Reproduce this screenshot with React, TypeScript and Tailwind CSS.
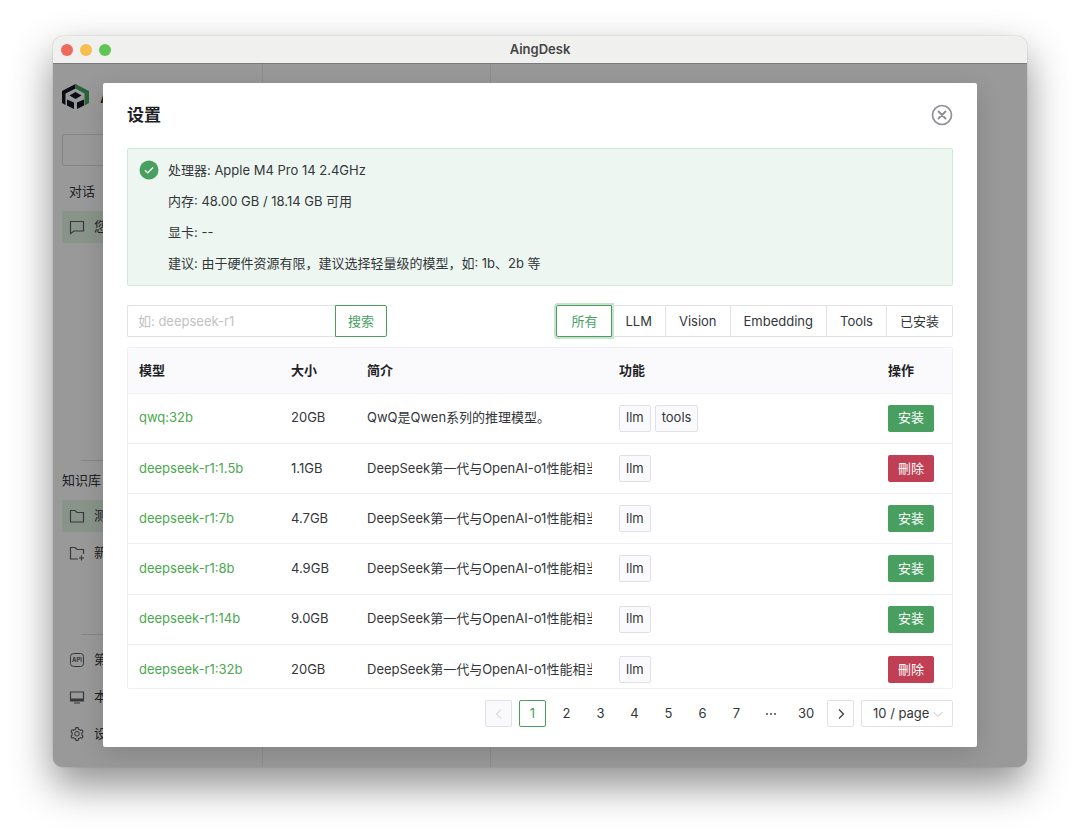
import { useState, type ReactNode } from "react"
import { AiOutlineSetting } from "react-icons/ai"

interface Model {
  name: string
  size: string
  description: string
  tags: string[]
  installed: boolean
}

const deepseekIntro = "DeepSeek第一代与OpenAI-o1性能相当"

const models: Model[] = [
  { name: "qwq:32b", size: "20GB", description: "QwQ是Qwen系列的推理模型。", tags: ["llm", "tools"], installed: false },
  { name: "deepseek-r1:1.5b", size: "1.1GB", description: deepseekIntro, tags: ["llm"], installed: true },
  { name: "deepseek-r1:7b", size: "4.7GB", description: deepseekIntro, tags: ["llm"], installed: false },
  { name: "deepseek-r1:8b", size: "4.9GB", description: deepseekIntro, tags: ["llm"], installed: false },
  { name: "deepseek-r1:14b", size: "9.0GB", description: deepseekIntro, tags: ["llm"], installed: false },
  { name: "deepseek-r1:32b", size: "20GB", description: deepseekIntro, tags: ["llm"], installed: true },
]

const hardware = [
  "处理器: Apple M4 Pro 14 2.4GHz",
  "内存: 48.00 GB / 18.14 GB 可用",
  "显卡: --",
  "建议: 由于硬件资源有限，建议选择轻量级的模型，如: 1b、2b 等",
]

const filters = ["所有", "LLM", "Vision", "Embedding", "Tools", "已安装"]

function Logo() {
  return (
    <svg viewBox="0 0 27 25" className="h-[25px] w-[27px] shrink-0">
      <path fill="#0f1424" d="M13.500 0 0 7v12l3.500 2V9.500l10-5z" />
      <path fill="#45a562" d="M13.500 0 27 7v12l-4.500 2.500V9.500l-9-5z" />
      <path fill="#0f1424" d="M13.500 8 19.500 11.500l-6 3.500-6-3.500z" />
      <path fill="#0f1424" d="M5 15.500l7 3V25l-7-3.500zM22 15.500l-7 3V25l7-3.500z" />
    </svg>
  )
}

function LineIcon({ children }: { children: ReactNode }) {
  return (
    <svg viewBox="0 0 16 16" fill="none" stroke="currentColor" strokeWidth="1.2" className="size-4 shrink-0">
      {children}
    </svg>
  )
}

function NavItem({ icon, label, active }: { icon: ReactNode; label: string; active?: boolean }) {
  return (
    <button
      type="button"
      className={`flex h-8 w-full items-center gap-[9px] rounded-xs px-[7px] text-left text-[#333639] ${active ? "bg-[#e3f6e7]" : ""}`}
    >
      <span className="flex w-4 text-[#5c5f63]">{icon}</span>
      {label}
    </button>
  )
}

function Sidebar() {
  return (
    <aside className="flex w-[210px] shrink-0 flex-col border-r border-[#ececec] px-[9px] pb-[17px]">
      <div className="flex h-[71px] items-center gap-[11px] pb-1 text-lg font-semibold">
        <Logo />
        AingDesk
      </div>
      <button type="button" aria-label="新建对话" className="h-8 rounded-xs border border-[#e0e0e6]" />
      <h2 className="mt-[13px] px-[7px] leading-6">对话</h2>
      <div className="mt-2 flex-1">
        <NavItem active label="您好" icon={<LineIcon><path d="M1.500 2.500h13v9.500H5L1.500 14.500z" /></LineIcon>} />
      </div>
      <hr className="ml-[19px] border-[#e0e0e6]" />
      <h2 className="mt-[7px] leading-6">知识库</h2>
      <div className="mt-2 flex h-[134px] flex-col gap-[5px]">
        <NavItem active label="测试" icon={<LineIcon><path d="M1.500 2.500h4.500l2 2h6.500v9.500h-13z" /></LineIcon>} />
        <NavItem label="新建知识库" icon={<LineIcon><path d="M9 14H1.500V2.500H6l2 2h6.500V9M12.500 10.500v5M10 13h5" /></LineIcon>} />
      </div>
      <hr className="ml-[19px] border-[#e0e0e6]" />
      <nav className="mt-[9px] flex flex-col gap-[5px]">
        <NavItem
          label="第三方API"
          icon={
            <svg viewBox="0 0 16 16" className="size-4">
              <rect x="1.500" y="1.500" width="13" height="13" rx="3" fill="none" stroke="currentColor" />
              <text x="8" y="10" textAnchor="middle" fontSize="6" fontWeight="700" fill="currentColor">API</text>
            </svg>
          }
        />
        <NavItem
          label="本地模型"
          icon={<LineIcon><path d="M1.500 3h13v9h-13zM1.500 10h13M1.500 11h13M5 14h6" /></LineIcon>}
        />
        <NavItem label="设置" icon={<AiOutlineSetting className="size-4" />} />
      </nav>
    </aside>
  )
}

function HardwareAlert() {
  return (
    <div className="mt-[21px] flex gap-[9px] rounded-xs border border-[#cfe8d7] bg-[#edf6f1] px-[11px] py-[6px]">
      <svg viewBox="0 0 20 20" className="mt-[5px] size-5 shrink-0">
        <circle cx="10" cy="10" r="9.500" fill="#489f5f" />
        <path d="M6 10.300l2.700 2.600L14 7.500" fill="none" stroke="#fff" strokeWidth="1.200" />
      </svg>
      <div className="leading-[31px]">
        {hardware.map((line) => (
          <p key={line}>{line}</p>
        ))}
      </div>
    </div>
  )
}

function Toolbar() {
  const [filter, setFilter] = useState("所有")

  return (
    <div className="mt-[19px] flex items-center justify-between">
      <form className="flex h-8" onSubmit={(e) => e.preventDefault()}>
        <input
          type="text"
          aria-label="搜索模型"
          placeholder="如: deepseek-r1"
          className="w-52 rounded-l-xs border border-r-0 border-[#e0e0e6] px-[10px] pt-px outline-none placeholder:text-[#c2c2c2]"
        />
        <button type="submit" className="rounded-r-xs border border-[#489f5f] px-3 pt-px text-[#489f5f]">
          搜索
        </button>
      </form>
      <div className="flex h-8">
        {filters.map((item) => (
          <button
            key={item}
            type="button"
            onClick={() => setFilter(item)}
            className={`border px-[13px] pt-px first:rounded-l-xs first:px-[14px] last:rounded-r-xs ${
              filter === item
                ? "border-[#489f5f] text-[#489f5f] ring-2 ring-[#489f5f]/30"
                : "border-l-0 border-[#e0e0e6]"
            }`}
          >
            {item}
          </button>
        ))}
      </div>
    </div>
  )
}

function ModelTable() {
  return (
    <div className="mt-[10px] h-[342px] overflow-hidden rounded-xs border border-[#efeff5]">
      <table className="h-[347px] w-full table-fixed border-collapse text-left">
        <thead className="bg-[#fafafc] text-[#1f2225]">
          <tr className="h-[45px] border-b border-[#efeff5]">
            <th className="w-[152px] px-[11px] font-semibold">模型</th>
            <th className="w-[76px] px-[11px] font-semibold">大小</th>
            <th className="w-[252px] px-[11px] font-semibold">简介</th>
            <th className="px-[11px] font-semibold">功能</th>
            <th className="w-[75px] px-[11px] font-semibold">操作</th>
          </tr>
        </thead>
        <tbody>
          {models.map((model) => (
            <tr key={model.name} className="h-[50px] border-b border-[#efeff5]">
              <td className="px-[11px] whitespace-nowrap text-[#4ba84f]">{model.name}</td>
              <td className="px-[11px]">{model.size}</td>
              <td className="pr-4 pl-[11px]">
                <div className="overflow-hidden whitespace-nowrap">{model.description}</div>
              </td>
              <td className="px-[11px]">
                <div className="flex gap-1">
                  {model.tags.map((tag) => (
                    <span
                      key={tag}
                      className="flex h-[27px] items-center rounded-xs border border-[#e0e0e6] bg-[#fafafc] px-[6px]"
                    >
                      {tag}
                    </span>
                  ))}
                </div>
              </td>
              <td className="pl-[11px]">
                <button
                  type="button"
                  className={`flex h-[27px] w-[46px] items-center justify-center rounded-xs text-white ${
                    model.installed ? "bg-[#c13f54]" : "bg-[#489f5f]"
                  }`}
                >
                  {model.installed ? "刪除" : "安装"}
                </button>
              </td>
            </tr>
          ))}
        </tbody>
      </table>
    </div>
  )
}

function Pagination() {
  const [page, setPage] = useState(1)

  return (
    <div className="mt-[11px] flex h-[27px] justify-end gap-[7px]">
      <button
        type="button"
        aria-label="上一页"
        disabled
        className="flex w-[27px] items-center justify-center rounded-xs border border-[#e0e0e6] bg-[#fafafc] text-[#c2c2c2]"
      >
        <svg viewBox="0 0 12 12" fill="none" stroke="currentColor" className="size-3">
          <path d="M8 1.500 3.500 6 8 10.500" />
        </svg>
      </button>
      {[1, 2, 3, 4, 5, 6, 7].map((n) => (
        <button
          key={n}
          type="button"
          onClick={() => setPage(n)}
          className={`w-[27px] rounded-xs ${page === n ? "border border-[#489f5f] text-[#489f5f]" : ""}`}
        >
          {n}
        </button>
      ))}
      <span className="flex w-7 items-center justify-center">
        <svg viewBox="0 0 12 12" fill="currentColor" className="size-3">
          <circle cx="2" cy="6" r="0.900" />
          <circle cx="6" cy="6" r="0.900" />
          <circle cx="10" cy="6" r="0.900" />
        </svg>
      </span>
      <button type="button" className="w-7" onClick={() => setPage(30)}>
        30
      </button>
      <button
        type="button"
        aria-label="下一页"
        className="flex w-[27px] items-center justify-center rounded-xs border border-[#e0e0e6]"
      >
        <svg viewBox="0 0 12 12" fill="none" stroke="currentColor" strokeWidth="1.200" className="size-3">
          <path d="M4 1.500 8.500 6 4 10.500" />
        </svg>
      </button>
      <div className="relative">
        <select
          aria-label="每页条数"
          className="h-full w-[92px] appearance-none rounded-xs border border-[#e0e0e6] bg-transparent pl-[11px]"
        >
          <option>10 / page</option>
          <option>20 / page</option>
        </select>
        <svg
          viewBox="0 0 12 12"
          fill="none"
          stroke="#c2c2c2"
          className="pointer-events-none absolute top-2 right-[9px] size-3"
        >
          <path d="M1.500 4 6 8.500 10.500 4" />
        </svg>
      </div>
    </div>
  )
}

function SettingsDialog() {
  return (
    <section
      role="dialog"
      aria-labelledby="settings-title"
      className="rounded-xs bg-white px-6 py-5 shadow-[0_6px_24px_rgba(0,0,0,0.15)]"
    >
      <header className="flex h-6 items-center justify-between">
        <h1 id="settings-title" className="pt-px text-[17px] font-semibold text-[#1f2225]">设置</h1>
        <button type="button" aria-label="关闭" className="text-[#8f9096]">
          <svg viewBox="0 0 22 22" fill="none" stroke="currentColor" strokeWidth="1.700" className="size-[22px]">
            <circle cx="11" cy="11" r="9.500" />
            <path d="M7.500 7.500l7 7M14.500 7.500l-7 7" strokeWidth="1.900" strokeLinecap="round" />
          </svg>
        </button>
      </header>
      <HardwareAlert />
      <Toolbar />
      <ModelTable />
      <Pagination />
    </section>
  )
}

export default function App() {
  return (
    <div className="min-h-screen bg-white px-[53px] pt-9 pb-[70px] font-['Inter','Noto_Sans_CJK_SC',sans-serif] text-[13px] text-[#333639]">
      <div className="overflow-hidden rounded-[10px] shadow-[0_0_1px_rgba(0,0,0,0.5),0_18px_40px_rgba(0,0,0,0.45)]">
        <div className="grid h-[27px] grid-cols-3 items-center bg-[#f0f0ee] px-2">
          <div className="flex gap-[7px]">
            <span className="size-3 rounded-full bg-[#ed6a5e]" />
            <span className="size-3 rounded-full bg-[#f5bf4f]" />
            <span className="size-3 rounded-full bg-[#61c554]" />
          </div>
          <span className="text-center font-semibold text-[#454545]">AingDesk</span>
        </div>
        <div className="grid">
          <div className="col-start-1 row-start-1 flex">
            <Sidebar />
            <div className="w-[228px] border-r border-[#ececec]" />
          </div>
          <div className="z-10 col-start-1 row-start-1 border-t border-black/20 bg-black/40 px-[50px] pt-[19px] pb-5">
            <SettingsDialog />
          </div>
        </div>
      </div>
    </div>
  )
}
